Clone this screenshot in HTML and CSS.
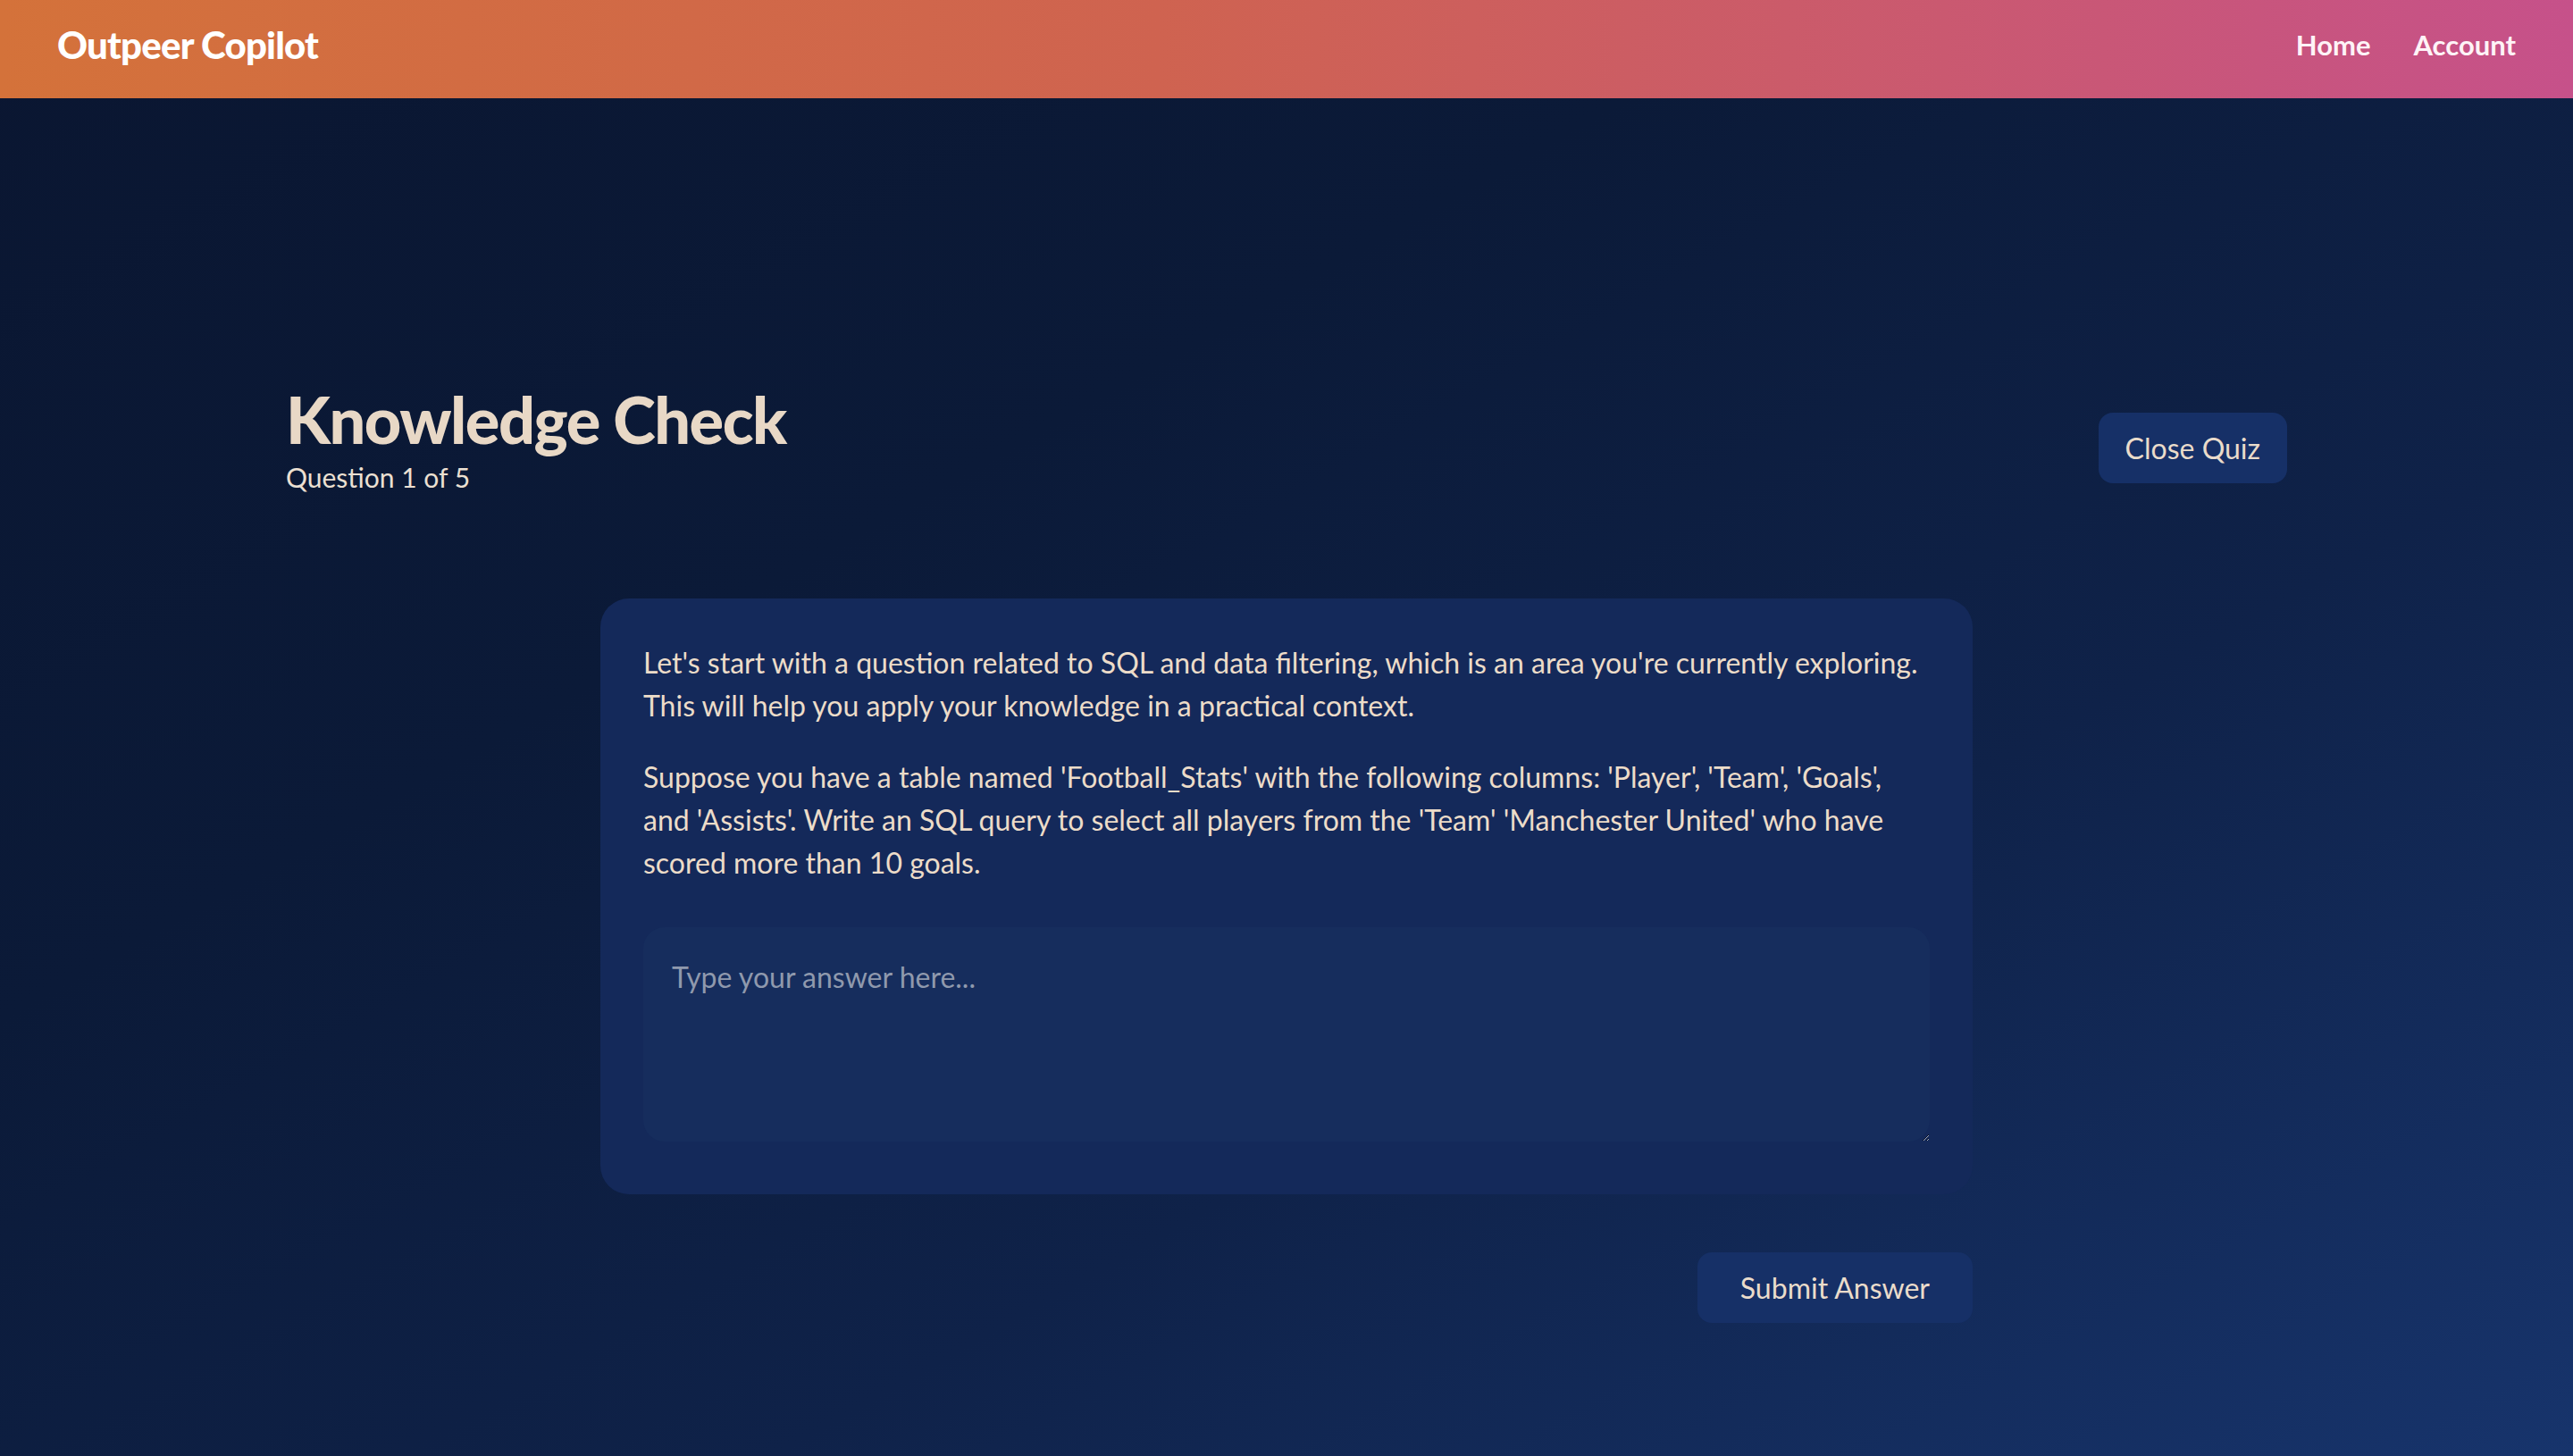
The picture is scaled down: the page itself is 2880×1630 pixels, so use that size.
FILE: index.html
```html
<!DOCTYPE html>
<html lang="en">
<head>
<meta charset="utf-8">
<title>Outpeer Copilot – Knowledge Check</title>
<link rel="stylesheet" href="styles.css">
</head>
<body>
<header class="topbar">
  <a class="brand" href="#">Outpeer Copilot</a>
  <nav class="nav">
    <a class="nav-link" href="#">Home</a>
    <a class="nav-link" href="#">Account</a>
  </nav>
</header>
<main class="page">
  <div class="quiz-head">
    <div class="quiz-title-block">
      <h1 class="quiz-title">Knowledge Check</h1>
      <p class="quiz-progress">Question 1 of 5</p>
    </div>
    <button class="btn btn-close" type="button">Close Quiz</button>
  </div>
  <section class="card">
    <p class="question-text">Let's start with a question related to SQL and data filtering, which is an area you're currently exploring. This will help you apply your knowledge in a practical context.</p>
    <p class="question-text">Suppose you have a table named 'Football_Stats' with the following columns: 'Player', 'Team', 'Goals', and 'Assists'. Write an SQL query to select all players from the 'Team' 'Manchester United' who have scored more than 10 goals.</p>
    <textarea class="answer" placeholder="Type your answer here..."></textarea>
  </section>
  <div class="actions">
    <button class="btn btn-submit" type="button">Submit Answer</button>
  </div>
</main>
</body>
</html>
```
FILE: styles.css
```css
* { box-sizing: border-box; }
html, body { margin: 0; padding: 0; }
body {
  font-family: Lato, "Open Sans", sans-serif;
  color: #e9d9c7;
  min-height: 1630px;
  background: linear-gradient(to bottom right, #0a1631 0%, #0b1a38 35%, #0f2249 65%, #17346c 100%);
}
.topbar {
  height: 110px;
  display: flex;
  align-items: center;
  justify-content: space-between;
  padding: 0 64px 10px 64px;
  background: linear-gradient(to right, #d4723a 0%, #cf6350 45%, #c6518a 100%);
}
.brand {
  color: #ffffff;
  text-decoration: none;
  font-weight: 900;
  font-size: 42px;
  letter-spacing: -0.8px;
}
.nav { display: flex; gap: 48px; }
.nav-link {
  color: #fff3f7;
  text-decoration: none;
  font-weight: 700;
  font-size: 31px;
}
.page { padding-top: 320px; padding-bottom: 80px; }
.quiz-head {
  width: 2240px;
  margin: 0 auto 112px;
  display: flex;
  justify-content: space-between;
  align-items: flex-start;
}
.quiz-title {
  margin: 0;
  font-size: 72px;
  line-height: 1.1;
  font-weight: 900;
  letter-spacing: -1.5px;
  color: #e8d8c6;
}
.quiz-progress {
  margin: 1px 0 0;
  font-size: 30px;
  line-height: 48px;
  color: #ece0d2;
}
.btn {
  font-family: Lato, "Open Sans", sans-serif;
  font-size: 32px;
  line-height: 47px;
  color: #eadccb;
  background: #163067;
  border: 0;
  border-radius: 16px;
  padding: 16px 30px;
  cursor: pointer;
}
.btn-close { margin-top: 32px; }
.btn-submit { padding: 16px 48px; }
.card {
  width: 1536px;
  margin: 0 auto;
  background: #14295a;
  border-radius: 32px;
  padding: 48px 48px 59px;
}
.question-text {
  margin: 0 0 32px;
  font-size: 32px;
  line-height: 48px;
  color: #ecdcc9;
}
.question-text + .question-text { margin-bottom: 0; }
.answer {
  display: block;
  width: 100%;
  height: 240px;
  margin-top: 48px;
  padding: 32px;
  border: 0;
  border-radius: 24px;
  background: #162d5d;
  color: #ecdcc9;
  font-family: Lato, "Open Sans", sans-serif;
  font-size: 32px;
  line-height: 48px;
  outline: none;
}
.answer::placeholder { color: #8f99ad; }
.actions {
  width: 1536px;
  margin: 65px auto 0;
  display: flex;
  justify-content: flex-end;
}
```
